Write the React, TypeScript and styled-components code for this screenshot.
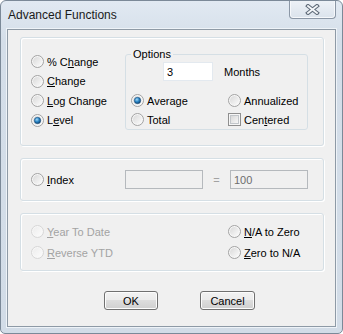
import React from "react";
import styled, { createGlobalStyle } from "styled-components";

const GlobalStyle = createGlobalStyle`
  html, body {
    margin: 0;
    padding: 0;
    background: #ffffff;
  }
  body {
    font-family: "Liberation Sans", Arial, sans-serif;
    font-size: 11px;
    color: #000000;
  }
`;

// underlined access key letter
const Key = styled.span`
  text-decoration: underline;
`;

function RadioIcon({ checked, disabled }: { checked?: boolean; disabled?: boolean }) {
  const ring = disabled ? "#d6d6d6" : "#a2a2a2";
  return (
    <svg width="13" height="13" viewBox="0 0 13 13">
      <defs>
        <linearGradient id={disabled ? "rfd" : "rf"} x1="0" y1="0" x2="1" y2="1">
          <stop offset="0" stopColor={disabled ? "#ededed" : "#d9d9d9"} />
          <stop offset="1" stopColor={disabled ? "#fbfbfb" : "#fbfbfb"} />
        </linearGradient>
        <radialGradient id="rdot" cx="0.4" cy="0.35" r="0.7">
          <stop offset="0" stopColor="#a4d9f7" />
          <stop offset="0.5" stopColor="#2a86c6" />
          <stop offset="1" stopColor="#0c3b66" />
        </radialGradient>
      </defs>
      <circle cx="6.5" cy="6.5" r="6" fill="#f7f7f7" stroke={ring} strokeWidth="1" />
      <circle cx="6.5" cy="6.5" r="4.5" fill={`url(#${disabled ? "rfd" : "rf"})`} />
      {checked && <circle cx="6.5" cy="6.5" r="3.2" fill="url(#rdot)" stroke="#1d4f7c" strokeWidth="0.6" />}
    </svg>
  );
}

function CheckIcon() {
  return (
    <svg width="13" height="13" viewBox="0 0 13 13">
      <defs>
        <linearGradient id="cf" x1="0" y1="0" x2="1" y2="1">
          <stop offset="0" stopColor="#d6d6d6" />
          <stop offset="1" stopColor="#f9f9f9" />
        </linearGradient>
      </defs>
      <rect x="0.5" y="0.5" width="12" height="12" fill="#f6f6f6" stroke="#8f8f8f" />
      <rect x="2.5" y="2.5" width="8" height="8" fill="url(#cf)" stroke="#c2c6ca" />
    </svg>
  );
}

function CloseGlyph() {
  return (
    <svg width="15" height="11" viewBox="0 0 15 11">
      <path d="M3 2 L12 9 M12 2 L3 9" stroke="#5f6b79" strokeWidth="4" strokeLinecap="square" />
      <path d="M3 2 L12 9 M12 2 L3 9" stroke="#f2f5f8" strokeWidth="1.8" strokeLinecap="square" />
    </svg>
  );
}

type ChoiceProps = {
  children: React.ReactNode;
  checked?: boolean;
  disabled?: boolean;
};

function Radio({ children, checked, disabled }: ChoiceProps) {
  return (
    <Choice $disabled={disabled}>
      <RadioIcon checked={checked} disabled={disabled} />
      <span>{children}</span>
    </Choice>
  );
}

export default function App() {
  return (
    <>
      <GlobalStyle />
      <Window>
        <TitleBar>
          <Title>Advanced Functions</Title>
          <CloseButton>
            <CloseGlyph />
          </CloseButton>
        </TitleBar>
        <Client>
          <Group $height={109}>
            <ChangeColumn>
              <Radio>% C<Key>h</Key>ange</Radio>
              <Radio><Key>C</Key>hange</Radio>
              <Radio><Key>L</Key>og Change</Radio>
              <Radio checked>L<Key>e</Key>vel</Radio>
            </ChangeColumn>
            <Options>
              <Legend>Options</Legend>
              <MonthsRow>
                <TextBox value="3" readOnly />
                <span>Months</span>
              </MonthsRow>
              <OptionsGrid>
                <Radio checked>Average</Radio>
                <Radio>Annualized</Radio>
                <Radio>Total</Radio>
                <Choice>
                  <CheckIcon />
                  <span>Cen<Key>t</Key>ered</span>
                </Choice>
              </OptionsGrid>
            </Options>
          </Group>

          <Group $height={43}>
            <IndexRow>
              <IndexLabel>
                <Radio><Key>I</Key>ndex</Radio>
              </IndexLabel>
              <TextBox $width={78} $disabled readOnly value="" />
              <Equals>=</Equals>
              <TextBox $width={78} $disabled readOnly value="100" />
            </IndexRow>
          </Group>

          <Group $height={58}>
            <ExtrasGrid>
              <Radio disabled><Key>Y</Key>ear To Date</Radio>
              <Radio><Key>N</Key>/A to Zero</Radio>
              <Radio disabled><Key>R</Key>everse YTD</Radio>
              <Radio><Key>Z</Key>ero to N/A</Radio>
            </ExtrasGrid>
          </Group>

          <ButtonRow>
            <PushButton $width={54}>OK</PushButton>
            <PushButton $width={55}>Cancel</PushButton>
          </ButtonRow>
        </Client>
      </Window>
    </>
  );
}

const Window = styled.div`
  box-sizing: border-box;
  width: 343px;
  height: 334px;
  display: flex;
  flex-direction: column;
  border: 1px solid #7b8998;
  border-radius: 6px 6px 5px 5px;
  background: linear-gradient(#e1e9f2, #d4dee9 40px, #d2dce7);
  overflow: hidden;
`;

const TitleBar = styled.div`
  height: 28px;
  display: flex;
  align-items: flex-start;
  justify-content: space-between;
`;

const Title = styled.div`
  padding: 7px 0 0 7px;
  font-family: "Liberation Sans", Arial, sans-serif;
  font-size: 12px;
  color: #1a1a1a;
`;

const CloseButton = styled.div`
  box-sizing: border-box;
  width: 47px;
  height: 19px;
  margin-right: 6px;
  margin-top: -1px;
  display: flex;
  align-items: center;
  justify-content: center;
  border: 1px solid #8b97a6;
  border-top: none;
  border-radius: 0 0 4px 4px;
  background: linear-gradient(#eef2f7, #dbe3ec);
  box-shadow: inset 0 0 0 1px #f6f8fb;
`;

const Client = styled.div`
  box-sizing: border-box;
  margin: 0 6px 6px 6px;
  flex: 1;
  display: flex;
  flex-direction: column;
  gap: 12px;
  padding: 7px 11px 0 12px;
  background: #f0f0f0;
  border: 1px solid #8e9aa6;
  box-shadow: 0 0 0 1px #eef3f8;
`;

const Group = styled.div<{ $height: number }>`
  box-sizing: border-box;
  height: ${(p) => p.$height}px;
  display: flex;
  border: 1px solid #d5dfe5;
  border-radius: 3px;
  box-shadow: inset 1px 1px 0 #ffffff, 1px 1px 0 #ffffff;
`;

const Choice = styled.label<{ $disabled?: boolean }>`
  display: flex;
  align-items: center;
  gap: 3px;
  height: 19px;
  white-space: nowrap;
  color: ${(p) => (p.$disabled ? "#a3a3a3" : "#000000")};
  svg {
    flex: none;
  }
`;

const ChangeColumn = styled.div`
  width: 94px;
  padding: 14px 0 0 10px;
  display: flex;
  flex-direction: column;
  ${Choice} {
    height: 19.5px;
  }
`;

const Options = styled.fieldset`
  box-sizing: border-box;
  width: 183px;
  height: 82px;
  margin: 10px 0 0 0;
  padding: 0;
  border: 1px solid #d5dfe5;
  border-radius: 3px;
  min-width: 0;
`;

const Legend = styled.legend`
  margin-left: 5px;
  padding: 0 2px;
  line-height: 13px;
`;

const MonthsRow = styled.div`
  display: flex;
  align-items: center;
  gap: 11px;
  margin: 1px 0 0 37px;
`;

const TextBox = styled.input<{ $width?: number; $disabled?: boolean }>`
  box-sizing: border-box;
  width: ${(p) => p.$width ?? 50}px;
  height: 19px;
  margin: 0;
  padding: 0 3px;
  font-family: "Liberation Sans", Arial, sans-serif;
  font-size: 11px;
  color: ${(p) => (p.$disabled ? "#6d6d6d" : "#000000")};
  background: ${(p) => (p.$disabled ? "#f0f0f0" : "#ffffff")};
  border: 1px solid ${(p) => (p.$disabled ? "#b5b9bd" : "#e3e9ef")};
  outline: none;
`;

const OptionsGrid = styled.div`
  display: grid;
  grid-template-columns: 97px auto;
  grid-auto-rows: 19px;
  margin: 10px 0 0 5px;
`;

const IndexRow = styled.div`
  display: flex;
  align-items: center;
  padding-left: 10px;
`;

const IndexLabel = styled.div`
  width: 94px;
`;

const Equals = styled.span`
  width: 27px;
  text-align: center;
  color: #a3a3a3;
`;

const ExtrasGrid = styled.div`
  display: grid;
  grid-template-columns: 197px auto;
  grid-auto-rows: 21px;
  padding: 7px 0 0 10px;
  ${Choice} {
    height: 21px;
  }
`;

const ButtonRow = styled.div`
  display: flex;
  gap: 42px;
  margin-top: 8px;
  padding-left: 84px;
`;

const PushButton = styled.button<{ $width: number }>`
  box-sizing: border-box;
  width: ${(p) => p.$width}px;
  height: 19px;
  padding: 0;
  font-family: "Liberation Sans", Arial, sans-serif;
  font-size: 11px;
  color: #000000;
  border: 1px solid #707070;
  border-radius: 3px;
  background: linear-gradient(#f2f2f2 0%, #ebebeb 50%, #dddddd 50%, #cfcfcf 100%);
  box-shadow: inset 0 0 0 1px #fcfcfc;
`;
